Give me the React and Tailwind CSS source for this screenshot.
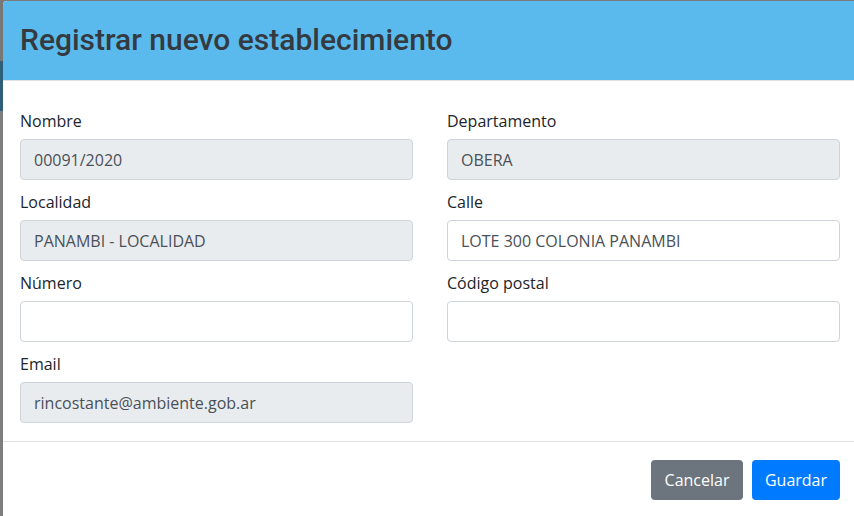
const fields = [
  { label: 'Nombre', value: '00091/2020', readOnly: true },
  { label: 'Departamento', value: 'OBERA', readOnly: true },
  { label: 'Localidad', value: 'PANAMBI - LOCALIDAD', readOnly: true },
  { label: 'Calle', value: 'LOTE 300 COLONIA PANAMBI', readOnly: false },
  { label: 'Número', value: '', readOnly: false },
  { label: 'Código postal', value: '', readOnly: false },
  { label: 'Email', value: 'rincostante@ambiente.gob.ar', readOnly: true },
]

function Field({ label, value, readOnly }) {
  return (
    <div className="flex flex-col">
      <label className="text-[16px] leading-[22px] text-[#212529]">{label}</label>
      <div
        className={
          'mt-[7px] h-[41px] rounded-[4px] border border-[#ced4da] px-[13px] flex items-center text-[16px] text-[#495057] ' +
          (readOnly ? 'bg-[#e9ecef]' : 'bg-white')
        }
      >
        {value}
      </div>
    </div>
  )
}

export default function App() {
  return (
    <div className="w-[854px] h-[516px] overflow-hidden bg-[#7a7a7a] flex pt-[1px]" style={{ fontFamily: '"Open Sans", "Noto Sans", sans-serif' }}>
      <div className="w-[3px] flex flex-col shrink-0">
        <div className="h-[60px] bg-[#777]" />
        <div className="h-[50px] bg-[#2f5f78]" />
        <div className="flex-1 bg-[#7d7d7d]" />
      </div>
      <div className="w-[854px] shrink-0 bg-white rounded-tl-[4px] overflow-hidden flex flex-col">
        <div className="h-[79px] bg-[#5bbaed] border-b border-[#dee2e6] px-[17px] flex items-center box-content">
          <h2
            className="text-[30px] font-medium text-[#343a40] leading-none pb-[1px]"
            style={{ fontFamily: 'Roboto, "Liberation Sans", sans-serif' }}
          >
            Registrar nuevo establecimiento
          </h2>
        </div>
        <div className="px-[17px] pt-[29px] pb-[18px] border-b border-[#dee2e6]">
          <div className="grid grid-cols-2 gap-x-[34px] gap-y-[11px] w-[820px]">
            {fields.map((f) => (
              <Field key={f.label} {...f} />
            ))}
          </div>
        </div>
        <div className="flex justify-start pl-[648px] pt-[18px] gap-[9px]">
          <button className="h-[40px] w-[92px] rounded-[4px] bg-[#6c757d] text-white text-[16px]">Cancelar</button>
          <button className="h-[40px] w-[88px] rounded-[4px] bg-[#007bff] text-white text-[16px]">Guardar</button>
        </div>
      </div>
    </div>
  )
}
